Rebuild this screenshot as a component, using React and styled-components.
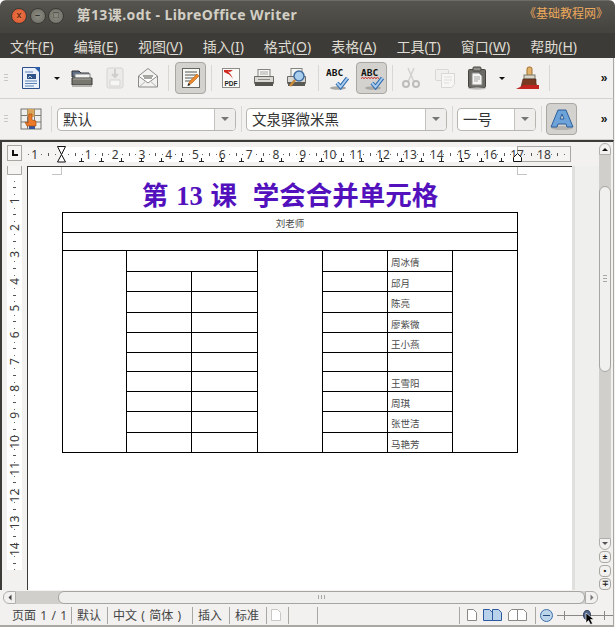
import React from 'react'
import styled, { createGlobalStyle, css } from 'styled-components'

const FONT = '"Noto Sans", "Noto Sans CJK SC", sans-serif'

const GlobalStyle = createGlobalStyle`
  html, body { margin: 0; padding: 0; background: #fff; }
  body { font-family: ${FONT}; }
`

const edgeLine = css`
  width: 614px;
  box-sizing: border-box;
  border-right: 1px solid #a9a7a2;
`

const Window = styled.div`
  width: 615px;
  height: 627px;
  display: flex;
  flex-direction: column;
  overflow: hidden;
  background: #f2f1f0;
  border-radius: 6px 6px 0 0;
`

const TitleBar = styled.div`
  height: 33px;
  display: flex;
  align-items: center;
  padding: 0 7px 3px 11px;
  box-sizing: border-box;
  background: linear-gradient(#55544e, #45443f 90%);
  border-top: 1px solid #6d6c66;
`

const WinButton = styled.div`
  width: 16px;
  height: 16px;
  border-radius: 50%;
  margin-right: 2.5px;
  display: flex;
  align-items: center;
  justify-content: center;
  font: bold 9px/1 "Liberation Sans", sans-serif;
  color: ${p => (p.$close ? '#6b2a12' : '#33332f')};
  background: ${p => (p.$close ? 'radial-gradient(#ef7b4c, #d9502a)' : 'radial-gradient(#8d8c83, #6c6b63)')};
  border: 1px solid #3a3935;
  box-sizing: border-box;
`

const Title = styled.div`
  margin: 0 0 4px 10px;
  font-size: 14px;
  font-weight: 700;
  letter-spacing: 0.42px;
  color: #d2cfc5;
  white-space: nowrap;
`

const Brand = styled.div`
  margin: 0 0 5px auto;
  font-size: 12px;
  color: #eda95d;
  white-space: nowrap;
`

const MenuBar = styled.div`
  height: 25px;
  display: flex;
  align-items: center;
  gap: 20px;
  padding-left: 10px;
  background: #3c3b37;
`

const MenuItem = styled.span`
  font-size: 14px;
  color: #dfdbd2;
  white-space: nowrap;
  u { text-underline-offset: 2px; }
`

const Toolbar = styled.div`
  ${edgeLine}
  height: 41px;
  flex: none;
  display: flex;
  align-items: center;
  background: #f2f1f0;
  border-bottom: 1px solid #d3d1cd;
`

const Grip = styled.div`
  width: 4px;
  height: 8px;
  margin: 0 8px 0 4px;
  background: repeating-linear-gradient(#c9c7c3 0 1px, transparent 1px 3px);
`

const Slot = styled.div`
  width: ${p => p.$w}px;
  height: 32px;
  flex: none;
  display: flex;
  align-items: center;
  justify-content: center;
  box-sizing: border-box;
  margin-right: ${p => p.$mr || 0}px;
  ${p => p.$active && `
    background: #d4d2ce;
    border: 1px solid #a9a7a2;
    border-radius: 4px;
  `}
`

const Sep = styled.div`
  width: ${p => p.$w}px;
  height: 26px;
  flex: none;
  display: flex;
  justify-content: center;
  &::before { content: ''; width: 1px; background: #d9d7d3; }
`

const Arrow = styled.div`
  width: 0;
  height: 0;
  border-left: ${p => p.$size || 4}px solid transparent;
  border-right: ${p => p.$size || 4}px solid transparent;
  border-top: ${p => p.$size || 4}px solid ${p => p.$color || '#111'};
`

const More = styled.div`
  margin-left: auto;
  width: 18px;
  text-align: center;
  font: bold 12px/1 "Liberation Sans", sans-serif;
  color: #111;
`

const Combo = styled.div`
  width: ${p => p.$w}px;
  height: 23px;
  flex: none;
  display: flex;
  box-sizing: border-box;
  background: #fff;
  border: 1px solid #b8b6b1;
  border-radius: 4px;
  overflow: hidden;
`

const ComboText = styled.div`
  flex: 1;
  padding-left: 5px;
  font-size: 14.5px;
  line-height: 20px;
  color: #333;
  white-space: nowrap;
`

const ComboButton = styled.div`
  width: 20px;
  display: flex;
  align-items: center;
  justify-content: center;
  background: #efeeec;
  border-left: 1px solid #c4c2bd;
`

const EditArea = styled.div`
  ${edgeLine}
  height: 450px;
  flex: none;
  display: flex;
  border-top: 2px solid #3c3b37;
  border-left: 2px solid #3c3b37;
`

const MainColumn = styled.div`
  width: 597px;
  flex: none;
  padding-left: 5px;
  box-sizing: border-box;
  display: flex;
  flex-direction: column;
`

const RulerRow = styled.div`
  height: 24px;
  flex: none;
  display: flex;
  padding-top: 3px;
  box-sizing: border-box;
`

const TabCorner = styled.div`
  width: 15px;
  height: 16px;
  margin-right: 1px;
  flex: none;
  box-sizing: border-box;
  background: #f5f4f3;
  border: 1px solid #a9a7a2;
  display: flex;
  align-items: center;
  justify-content: center;
  &::before {
    content: '';
    width: 6px;
    height: 6px;
    border-left: 2px solid #111;
    border-bottom: 2px solid #111;
    box-sizing: border-box;
  }
`

const RulerSvg = styled.svg`
  display: block;
  flex: none;
`

const DocRow = styled.div`
  flex: 1;
  display: flex;
  min-height: 0;
`

const DocView = styled.div`
  width: 545px;
  flex: none;
  margin-left: 5px;
  box-sizing: border-box;
  background: #fff;
  border-top: 1px solid #3c3b37;
  border-left: 1px solid #3c3b37;
  position: relative;
  padding: 13px 0 0 34px;
`

const Gutter = styled.div`
  flex: 1;
  background: #eff0ee;
  border-left: 3px solid #e0e0de;
`

const CropMark = styled.div`
  position: absolute;
  top: 0;
  left: ${p => p.$left}px;
  width: 10px;
  height: 8px;
  box-sizing: border-box;
  border-bottom: 1px solid #c4c4c4;
  ${p => (p.$side === 'right' ? 'border-left' : 'border-right')}: 1px solid #c4c4c4;
`

const Heading = styled.h1`
  width: 456px;
  height: 32px;
  margin: 0;
  font-family: "Liberation Serif", "Noto Sans CJK SC", serif;
  font-size: 26.5px;
  font-weight: 700;
  line-height: 32px;
  word-spacing: 1.2px;
  text-align: center;
  color: #5211bd;
  white-space: pre;
`

const LessonTable = styled.table`
  width: 455px;
  table-layout: fixed;
  border-collapse: collapse;
  font-size: 9.5px;
  color: #4a4a4a;
  td { border: 1px solid #000; padding: 0; }
`

const Row = styled.tr`
  height: ${p => p.$h}px;
`

const CenterCell = styled.td`
  text-align: center;
`

const NameCell = styled.td`
  && { padding: 2px 0 0 3px; }
`

const VScroll = styled.div`
  width: 12px;
  flex: none;
  display: flex;
  flex-direction: column;
  align-items: stretch;
  margin-top: 1px;
`

const ScrollEnd = styled.div`
  height: 12px;
  flex: none;
  display: flex;
  align-items: center;
  justify-content: center;
  background: #f2f1f0;
  border: 1px solid #b0aeaa;
  border-radius: ${p => (p.$down ? '0 0 6px 6px' : '6px 6px 0 0')};
  box-sizing: border-box;
`

const Trough = styled.div`
  flex: 1;
  padding-top: 31px;
  padding-bottom: 166px;
  background: #d0cfcb;
  display: flex;
  min-height: 0;
`

const Thumb = styled.div`
  flex: 1;
  box-sizing: border-box;
  background: #f0f0ee;
  border: 1px solid #a6a5a1;
  border-radius: 6px;
  display: flex;
  align-items: center;
  justify-content: center;
  &::before {
    content: '';
    width: 4px;
    height: 8px;
    background: repeating-linear-gradient(#a9a8a4 0 1px, transparent 1px 3px);
  }
`

const RoundButton = styled.div`
  width: 12px;
  height: 12px;
  margin-top: 1.5px;
  flex: none;
  box-sizing: border-box;
  border: 1px solid #a9a7a2;
  border-radius: 4px;
  background: #f2f1f0;
  font: bold 8px/10px "Liberation Sans", sans-serif;
  color: #222;
  text-align: center;
`

const HScroll = styled.div`
  ${edgeLine}
  height: 14px;
  flex: none;
  display: flex;
  align-items: center;
  padding-left: 3px;
`

const HEnd = styled.div`
  width: 13px;
  height: 13px;
  flex: none;
  box-sizing: border-box;
  display: flex;
  align-items: center;
  justify-content: center;
  background: #f2f1f0;
  border: 1px solid #b0aeaa;
  border-radius: ${p => (p.$right ? '0 6px 6px 0' : '6px 0 0 6px')};
`

const HTrough = styled.div`
  width: 569px;
  height: 13px;
  flex: none;
  padding-left: 42px;
  box-sizing: border-box;
  background: #d0cfcb;
  display: flex;
`

const HThumb = styled.div`
  flex: 1;
  box-sizing: border-box;
  background: #eff0ee;
  border: 1px solid #a6a5a1;
  border-radius: 6px;
  display: flex;
  align-items: center;
  justify-content: center;
  &::before {
    content: '';
    width: 8px;
    height: 4px;
    background: repeating-linear-gradient(90deg, #a9a8a4 0 1px, transparent 1px 3px);
  }
`

const StatusBar = styled.div`
  ${edgeLine}
  height: 23px;
  flex: none;
  display: flex;
  align-items: center;
  border-bottom: 2px solid #a9a7a2;
  padding-top: 1px;
  font-size: 12px;
  color: #454545;
  position: relative;
`

const Cell = styled.div`
  width: ${p => p.$w}px;
  height: 17px;
  flex: none;
  display: flex;
  align-items: center;
  gap: ${p => p.$gap || 0}px;
  word-spacing: 1.2px;
  box-sizing: border-box;
  padding-left: ${p => p.$pl ?? 5}px;
  border-right: 1px solid #a9a7a2;
  white-space: nowrap;
`

const ZoomBox = styled.div`
  flex: 1;
  height: 17px;
  display: flex;
  align-items: center;
  padding-left: 4px;
`

const ZoomOut = styled.div`
  width: 13px;
  height: 13px;
  flex: none;
  box-sizing: border-box;
  border-radius: 50%;
  border: 1px solid #3b6fa8;
  background: #bcd4ea;
  display: flex;
  align-items: center;
  justify-content: center;
  &::before { content: ''; width: 7px; height: 1px; background: #234a78; }
`

const Slider = styled.div`
  position: relative;
  flex: 1;
  height: 13px;
  margin-left: 4px;
  &::before { content: ''; position: absolute; left: 0; right: 0; top: 6px; height: 1px; background: #8a8884; }
`

const SliderTick = styled.div`
  position: absolute;
  top: 2px;
  left: ${p => p.$left}px;
  width: 1px;
  height: 9px;
  background: #8a8884;
`

const SliderThumb = styled.div`
  position: absolute;
  top: 1px;
  left: 26px;
  width: 8px;
  height: 10px;
  border-radius: 50%;
  background: #52688c;
  border: 1px solid #33425c;
  box-sizing: border-box;
`

const CursorSvg = styled.svg`
  position: absolute;
  top: 3px;
  left: 28px;
`

const Menu = ({ label, k }) => (
  <MenuItem>{label}(<u>{k}</u>)</MenuItem>
)

const PX_CM = 26.8
const ORIGIN = 61.5 - 23

const HRuler = () => {
  const nums = Array.from({ length: 18 }, (_, i) => i + 1)
  const fine = Array.from({ length: 88 }, (_, i) => i - 8).filter(i => i % 4 !== 0)
  const tabs = Array.from({ length: 22 }, (_, i) => 81 + i * 20 - 23)
  return (
    <RulerSvg width="549" height="21" viewBox="0 0 549 21">
      <rect x="0" y="2" width="39" height="15" fill="#f5f4f3" />
      <rect x="39" y="2" width="455" height="15" fill="#fff" />
      <rect x="494.5" y="1.5" width="53" height="15" fill="#f5f4f3" stroke="#a9a7a2" />
      {fine.map(i => {
        const x = ORIGIN + (i * PX_CM) / 4
        return i % 2 === 0
          ? <rect key={i} x={Math.round(x)} y="8" width="1" height="3" fill="#555" />
          : <rect key={i} x={Math.round(x)} y="9" width="1" height="1" fill="#666" />
      })}
      <text x={ORIGIN - PX_CM} y="14" textAnchor="middle" fontSize="12" fill="#3a3a3a" fontFamily="Noto Sans">1</text>
      {nums.map(n => (
        <text key={n} x={ORIGIN + n * PX_CM} y="14" textAnchor="middle" fontSize="12" fill="#3a3a3a" fontFamily="Noto Sans">{n}</text>
      ))}
      {tabs.map(x => (
        <path key={x} d={`M${x}.5 13v4M${x - 2} 16.5h5`} stroke="#222" fill="none" />
      ))}
      <path d="M34.5 1.5h8l-4 8 4 7.500h-8l4-7.500z" fill="#fff" stroke="#111" />
      <path d="M490.500 16.500v-4l4-4 4 4v4z" fill="#fff" stroke="#111" />
    </RulerSvg>
  )
}

const VRuler = () => {
  const nums = Array.from({ length: 14 }, (_, i) => i + 1)
  const fine = Array.from({ length: 60 }, (_, i) => i + 1).filter(i => i % 4 !== 0)
  const y0 = 8
  return (
    <RulerSvg width="15" height="424" viewBox="0 0 15 424">
      <rect x="0" y="0" width="15" height="8" fill="#f5f4f3" />
      <path d="M.5 0v8.500h14V0" fill="none" stroke="#a9a7a2" />
      <rect x="0" y="9" width="15" height="395" fill="#fff" />
      {fine.map(i => {
        const y = Math.round(y0 + (i * PX_CM) / 4)
        return i % 2 === 0
          ? <rect key={i} x="6" y={y} width="3" height="1" fill="#555" />
          : <rect key={i} x="7" y={y} width="1" height="1" fill="#666" />
      })}
      {nums.map(n => (
        <text key={n} transform={`translate(12 ${y0 + n * PX_CM}) rotate(-90)`} textAnchor="middle" fontSize="12" fill="#3a3a3a" fontFamily="Noto Sans">{n}</text>
      ))}
    </RulerSvg>
  )
}

const Ico = ({ w = 24, h = 24, children }) => (
  <svg width={w} height={h} viewBox={`0 0 ${w} ${h}`}>{children}</svg>
)

const NewDocIcon = () => (
  <Ico w={20} h={24}>
    <path d="M1.500 1.500h13l4 4v17h-17z" fill="#eaf1fa" stroke="#2a4f8a" />
    <path d="M13 1l6 6V1z" fill="#2a5fa8" />
    <path d="M4 6h8M4 15h12M4 17.500h12M4 20h9" stroke="#5f83b8" />
    <rect x="6" y="8" width="9" height="5" fill="#2f5488" />
    <path d="M7 12l2-2 2 2" stroke="#bcd" fill="none" />
  </Ico>
)

const OpenIcon = () => (
  <Ico w={22} h={20}>
    <path d="M1 3h7l2 2h8v4H1z" fill="#5c6f86" stroke="#333" />
    <rect x="4" y="6" width="15" height="5" fill="#f4f4f2" stroke="#888" />
    <path d="M1 10h20v7H1z" fill="#77766f" stroke="#3b3a36" />
    <path d="M2 11h18" stroke="#aaa9a3" />
    <rect x="1" y="17" width="20" height="2" fill="#b4b3ae" />
  </Ico>
)

const SaveIcon = () => (
  <Ico w={18} h={22}>
    <rect x="1" y="1" width="16" height="20" rx="2" fill="#ecebe9" stroke="#d4d3d0" />
    <rect x="4" y="13" width="10" height="6" fill="#f6f6f5" stroke="#d4d3d0" />
    <path d="M9 2v7M6 7l3 3 3-3" stroke="#cfcecb" strokeWidth="2" fill="none" />
  </Ico>
)

const MailIcon = () => (
  <Ico w={22} h={22}>
    <path d="M1.500 9L11 1.500 20.500 9v11h-19z" fill="#f2f2f0" stroke="#8b8a86" />
    <path d="M1.500 9L11 16l9.500-7" fill="#fff" stroke="#8b8a86" />
    <path d="M6 9h10M7 11h8" stroke="#8b8a86" strokeWidth="1.500" />
    <path d="M2 20l7-6M20 20l-7-6" stroke="#b5b4b0" />
  </Ico>
)

const EditIcon = () => (
  <Ico w={20} h={22}>
    <rect x="1.500" y="1.500" width="17" height="19" fill="#f8f8f6" stroke="#66655f" />
    <path d="M4 5h12M4 8h12M4 11h9M4 14h6" stroke="#55544f" />
    <path d="M7 18l2-4 7-7 2 2-7 7z" fill="#ee8a2e" stroke="#b45f14" strokeWidth=".6" />
    <path d="M6.500 19l1-3 2 2z" fill="#222" />
  </Ico>
)

const PdfIcon = () => (
  <Ico w={20} h={22}>
    <rect x="1.500" y="1.500" width="17" height="19" fill="#fafaf8" stroke="#8d8c88" />
    <path d="M3 3c4 0 7 4 9 9-2-3-4-5-5-5L3 5zM3 3l9 0-3 2z" fill="#cf2b22" />
    <text x="10" y="19" textAnchor="middle" fontSize="6.500" fontWeight="700" fontFamily="Liberation Sans" fill="#222">PDF</text>
  </Ico>
)

const PrintIcon = () => (
  <Ico w={22} h={20}>
    <rect x="5" y="1.500" width="12" height="8" fill="#f4f4f2" stroke="#85847f" />
    <path d="M7 4h8M7 6h8" stroke="#aaa" />
    <path d="M1.500 8.500h19v7h-19z" fill="#d9d8d4" stroke="#6d6c67" />
    <rect x="2" y="14" width="18" height="4" fill="#55544f" />
    <rect x="5" y="11" width="12" height="1" fill="#8d8c87" />
  </Ico>
)

const PreviewIcon = () => (
  <Ico w={22} h={22}>
    <rect x="5" y="1.500" width="11" height="8" fill="#f4f4f2" stroke="#85847f" />
    <path d="M1.500 9.500h18v7h-18z" fill="#d9d8d4" stroke="#6d6c67" />
    <rect x="2" y="15" width="17" height="4" fill="#5a5954" />
    <circle cx="13" cy="9" r="5" fill="#a9cdec" stroke="#3d6b9f" strokeWidth="1.500" />
    <path d="M9 13l-5 6" stroke="#c98a3a" strokeWidth="2.500" />
  </Ico>
)

const SpellIcon = ({ wavy }) => (
  <Ico w={26} h={24}>
    <text x="2" y="10" fontSize="9.500" fontWeight="700" fontFamily="DejaVu Sans Mono" fill="#111">ABC</text>
    {wavy && <path d="M2 12.500l1.500-1 1.500 1 1.500-1 1.500 1 1.500-1 1.500 1 1.500-1 1.500 1 1.500-1 1.500 1 1.500-1 1.500 1" stroke="#d02020" fill="none" />}
    <ellipse cx="14" cy="22" rx="8" ry="1.800" fill="#a9a8a4" />
    <path d="M13 17l3.500 4 7-9" fill="none" stroke="#2f69ad" strokeWidth="4" />
    <path d="M13 17l3.500 4 7-9" fill="none" stroke="#a8cdf0" strokeWidth="2" />
  </Ico>
)

const CutIcon = () => (
  <Ico w={20} h={22}>
    <path d="M13 1L7 15M7 1l6 14" stroke="#d2d1ce" strokeWidth="1.500" />
    <circle cx="5" cy="17" r="3" fill="none" stroke="#bdbcb9" strokeWidth="2" />
    <circle cx="15" cy="17" r="3" fill="none" stroke="#bdbcb9" strokeWidth="2" />
  </Ico>
)

const CopyIcon = () => (
  <Ico w={22} h={20}>
    <rect x="1.500" y="1.500" width="13" height="11" rx="1" fill="#f0efed" stroke="#d8d7d4" />
    <path d="M7.500 5.500h13v11l-3 3h-10z" fill="#f6f6f5" stroke="#d8d7d4" />
    <path d="M10 9h8M10 12h8M10 15h5" stroke="#dfdedb" />
  </Ico>
)

const PasteIcon = () => (
  <Ico w={20} h={24}>
    <rect x="1.500" y="3.500" width="17" height="18" rx="1" fill="#6b6a64" stroke="#44433f" />
    <rect x="6" y="1" width="8" height="4" rx="1" fill="#8f8e88" stroke="#44433f" />
    <path d="M5 7h7l3 3v9H5z" fill="#f4f4f2" stroke="#888" />
    <path d="M7 11h6M7 13h6M7 15h4" stroke="#a8a7a3" />
    <ellipse cx="10" cy="22.500" rx="9" ry="1.200" fill="#bdbcb8" />
  </Ico>
)

const BrushIcon = () => (
  <Ico w={24} h={24}>
    <rect x="11" y="1" width="5" height="9" rx="2" fill="#e3b26a" stroke="#a2702c" />
    <rect x="8" y="9" width="11" height="4" fill="#d9d6c9" stroke="#7a7868" />
    <path d="M7 13h13v4l1 4H5z" fill="#7a3a22" stroke="#43221a" strokeWidth=".6" />
    <path d="M0 23l8-4h15v4z" fill="#c2241f" />
  </Ico>
)

const StylesIcon = () => (
  <Ico w={22} h={24}>
    <rect x="1" y="2" width="20" height="20" fill="#eeeeec" stroke="#77766f" />
    <path d="M1 8.500h20M1 15h20M7.500 2v20M14.500 2v20" stroke="#77766f" />
    <rect x="7.500" y="2" width="7" height="8" fill="#d9a65b" />
    <rect x="9" y="19" width="6" height="3" fill="#2f54a0" />
    <path d="M9 7h3v6l4 1v5H7l-2-4 3 1z" fill="#ec7a28" stroke="#a84d0f" strokeWidth=".7" />
  </Ico>
)

const FontworkIcon = () => (
  <Ico w={24} h={22}>
    <ellipse cx="12" cy="20" rx="11" ry="2" fill="#b4b3af" />
    <path d="M8 2h8l7 17h-6l-1-3H8l-1 3H1z" fill="#6da3d8" stroke="#2d5f9d" />
    <path d="M10 11h4l-2-5z" fill="#d4d2ce" stroke="#2d5f9d" />
  </Ico>
)

const PageIcon = ({ stroke = '#8a8884', fill = '#fff' }) => (
  <Ico w={10} h={12}>
    <path d="M.5.500h6l3 3v8h-9z" fill={fill} stroke={stroke} />
  </Ico>
)

const TwoPageIcon = ({ stroke = '#8a8884', fill = '#fff' }) => (
  <Ico w={19} h={12}>
    <path d="M.5.500h6l3 3v8h-9zM9.500.500h6l3 3v8h-9z" fill={fill} stroke={stroke} />
  </Ico>
)

const BookIcon = () => (
  <Ico w={19} h={12}>
    <path d="M.5 3.500l3-3h6v11h-9zM9.500.500h6l3 3v8h-9z" fill="#fff" stroke="#8a8884" />
  </Ico>
)

const TEACHER = '刘老师'
const NAMES = ['周冰倩', '邱月', '陈亮', '廖紫微', '王小燕', '', '王雪阳', '周琪', '张世洁', '马艳芳']
const ROW_HEIGHTS = [21, 20, 21, 20, 20, 19, 20, 20, 21, 20]
const COLS = [64, 65, 66, 65, 65, 65, 65]

const App = () => (
  <Window>
    <GlobalStyle />
    <TitleBar>
      <WinButton $close>x</WinButton>
      <WinButton>–</WinButton>
      <WinButton>□</WinButton>
      <Title>第13课.odt - LibreOffice Writer</Title>
      <Brand>《基础教程网》</Brand>
    </TitleBar>
    <MenuBar>
      <Menu label="文件" k="F" />
      <Menu label="编辑" k="E" />
      <Menu label="视图" k="V" />
      <Menu label="插入" k="I" />
      <Menu label="格式" k="O" />
      <Menu label="表格" k="A" />
      <Menu label="工具" k="T" />
      <Menu label="窗口" k="W" />
      <Menu label="帮助" k="H" />
    </MenuBar>

    <Toolbar>
      <Grip />
      <Slot $w={30}><NewDocIcon /></Slot>
      <Slot $w={22}><Arrow $size={3} /></Slot>
      <Slot $w={28}><OpenIcon /></Slot>
      <Slot $w={38}><SaveIcon /></Slot>
      <Slot $w={28}><MailIcon /></Slot>
      <Sep $w={13} />
      <Slot $w={31} $active><EditIcon /></Slot>
      <Sep $w={10} />
      <Slot $w={30}><PdfIcon /></Slot>
      <Slot $w={36}><PrintIcon /></Slot>
      <Slot $w={30}><PreviewIcon /></Slot>
      <Sep $w={12} />
      <Slot $w={26} $mr={6}><SpellIcon /></Slot>
      <Slot $w={31} $active><SpellIcon wavy /></Slot>
      <Sep $w={10} />
      <Slot $w={28}><CutIcon /></Slot>
      <Slot $w={40}><CopyIcon /></Slot>
      <Slot $w={24}><PasteIcon /></Slot>
      <Slot $w={26}><Arrow $size={3} /></Slot>
      <Slot $w={26}><BrushIcon /></Slot>
      <Sep $w={16} />
      <More>»</More>
    </Toolbar>

    <Toolbar>
      <Grip />
      <Slot $w={30}><StylesIcon /></Slot>
      <Sep $w={11} />
      <Combo $w={179}>
        <ComboText>默认</ComboText>
        <ComboButton><Arrow $color="#777" /></ComboButton>
      </Combo>
      <Sep $w={10} />
      <Combo $w={201}>
        <ComboText>文泉驿微米黑</ComboText>
        <ComboButton><Arrow $color="#777" /></ComboButton>
      </Combo>
      <Sep $w={10} />
      <Combo $w={79}>
        <ComboText>一号</ComboText>
        <ComboButton><Arrow $color="#777" /></ComboButton>
      </Combo>
      <Sep $w={10} />
      <Slot $w={31} $active><FontworkIcon /></Slot>
      <More>»</More>
    </Toolbar>

    <EditArea>
      <MainColumn>
        <RulerRow>
          <TabCorner />
          <HRuler />
        </RulerRow>
        <DocRow>
          <VRuler />
          <DocView>
            <CropMark $left={24} />
            <CropMark $left={489} $side="right" />
            <Heading>第 13 课  学会合并单元格</Heading>
            <LessonTable>
              <colgroup>
                {COLS.map((w, i) => <col key={i} width={w} />)}
              </colgroup>
              <tbody>
                <Row $h={20}><CenterCell colSpan={7}>{TEACHER}</CenterCell></Row>
                <Row $h={18}><td colSpan={7} /></Row>
                {NAMES.map((name, i) => (
                  <Row key={i} $h={ROW_HEIGHTS[i]}>
                    {i === 0 && <td rowSpan={10} />}
                    {i === 0 ? <td colSpan={2} /> : <><td /><td /></>}
                    {i === 0 && <td rowSpan={10} />}
                    <td />
                    <NameCell>{name}</NameCell>
                    {i === 0 && <td rowSpan={10} />}
                  </Row>
                ))}
              </tbody>
            </LessonTable>
          </DocView>
          <Gutter />
        </DocRow>
      </MainColumn>
      <VScroll>
        <ScrollEnd><Arrow $size={3} style={{ transform: 'rotate(180deg)' }} /></ScrollEnd>
        <Trough><Thumb /></Trough>
        <ScrollEnd $down><Arrow $size={3} $color="#555" /></ScrollEnd>
        <RoundButton>±</RoundButton>
        <RoundButton>•</RoundButton>
        <RoundButton>∓</RoundButton>
      </VScroll>
    </EditArea>

    <HScroll>
      <HEnd><Arrow $size={3} $color="#444" style={{ transform: 'rotate(90deg)' }} /></HEnd>
      <HTrough><HThumb /></HTrough>
      <HEnd $right><Arrow $size={3} $color="#777" style={{ transform: 'rotate(-90deg)' }} /></HEnd>
    </HScroll>

    <StatusBar>
      <Cell $w={72} $pl={12}>页面 1 / 1</Cell>
      <Cell $w={36}>默认</Cell>
      <Cell $w={85}>中文 ( 简体 )</Cell>
      <Cell $w={37}>插入</Cell>
      <Cell $w={37}>标准</Cell>
      <Cell $w={22} $pl={4}><PageIcon stroke="#c8c7c4" /></Cell>
      <Cell $w={29} />
      <Cell $w={142} />
      <Cell $w={76} $pl={7} $gap={6}>
        <PageIcon />
        <TwoPageIcon stroke="#2d5a9e" fill="#b8d2ec" />
        <BookIcon />
      </Cell>
      <ZoomBox>
        <ZoomOut />
        <Slider>
          <SliderTick $left={7} />
          <SliderThumb />
          <SliderTick $left={47} />
          <CursorSvg width="10" height="14" viewBox="0 0 10 14">
            <path d="M1 1v10l2.500-2.500 2 4 2-1-2-4H9z" fill="#000" stroke="#fff" strokeWidth=".6" />
          </CursorSvg>
        </Slider>
      </ZoomBox>
    </StatusBar>
  </Window>
)

export default App
